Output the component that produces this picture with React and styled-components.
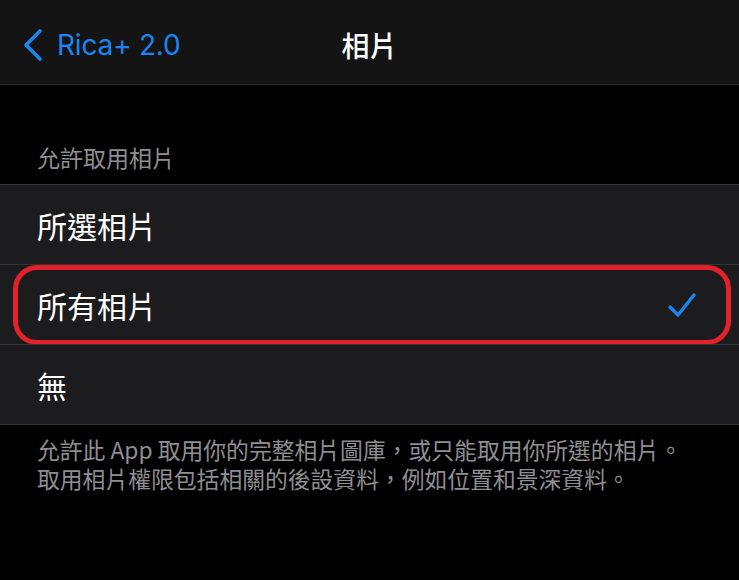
import styled, { createGlobalStyle } from 'styled-components';

const GlobalStyle = createGlobalStyle`
  html, body {
    margin: 0;
    padding: 0;
    background: #000000;
  }
  body {
    font-family: "Noto Sans CJK TC", "Inter", sans-serif;
    -webkit-font-smoothing: antialiased;
  }
`;

const options = [
  { id: 'selected', label: '所選相片' },
  { id: 'all', label: '所有相片', checked: true, highlight: true },
  { id: 'none', label: '無' },
];

export default function App() {
  return (
    <>
      <GlobalStyle />
      <Screen>
        <NavBar>
          <BackButton>
            <svg width="22" height="34" viewBox="0 0 22 34" fill="none">
              <path d="M18 3 L4 17 L18 31" stroke="#1a84f2" strokeWidth="3.6" strokeLinecap="round" strokeLinejoin="round" />
            </svg>
            <span>Rica+ 2.0</span>
          </BackButton>
          <Title>相片</Title>
        </NavBar>

        <SectionHeader>允許取用相片</SectionHeader>

        <List>
          {options.map((opt) => (
            <Row key={opt.id}>
              <RowLabel>{opt.label}</RowLabel>
              {opt.checked && (
                <svg width="30" height="28" viewBox="0 0 30 28" fill="none">
                  <path d="M3 16 L11 24 L27 4" stroke="#1a84f2" strokeWidth="3.4" strokeLinecap="round" strokeLinejoin="round" />
                </svg>
              )}
              {opt.highlight && <Highlight />}
            </Row>
          ))}
        </List>

        <Footer>
          允許此 App 取用你的完整相片圖庫，或只能取用你所選的相片。
          <br />
          取用相片權限包括相關的後設資料，例如位置和景深資料。
        </Footer>
      </Screen>
    </>
  );
}

const Screen = styled.div`
  width: 739px;
  height: 580px;
  background: #000000;
  overflow: hidden;
`;

const NavBar = styled.div`
  position: relative;
  height: 84px;
  background: #141414;
  border-bottom: 1px solid #2c2c2e;
  display: flex;
  align-items: center;
  justify-content: center;
`;

const BackButton = styled.div`
  position: absolute;
  left: 22px;
  top: 0;
  bottom: 0;
  display: flex;
  align-items: center;
  gap: 13px;
  color: #1a84f2;
  font-family: "Inter", "Noto Sans", sans-serif;
  font-size: 28px;
  letter-spacing: -0.2px;
  padding-top: 6px;
`;

const Title = styled.div`
  color: #ffffff;
  font-size: 28px;
  font-weight: 500;
  padding-top: 5px;
`;

const SectionHeader = styled.div`
  padding: 57px 37px 12px;
  font-size: 23px;
  line-height: 30px;
  color: #8e8e93;
`;

const List = styled.div`
  background: #1c1c1e;
  border-top: 1px solid #333335;
  border-bottom: 1px solid #333335;
`;

const Row = styled.div`
  position: relative;
  height: 79px;
  padding: 0 42px 0 37px;
  display: flex;
  align-items: center;
  justify-content: space-between;

  & + & {
    border-top: 1px solid #333335;
  }
`;

const RowLabel = styled.span`
  color: #ffffff;
  font-size: 30px;
  line-height: 40px;
`;

const Highlight = styled.div`
  position: absolute;
  top: 0;
  bottom: -1px;
  left: 13px;
  right: 8px;
  border: 5px solid #e3212b;
  border-radius: 24px;
  pointer-events: none;
`;

const Footer = styled.p`
  margin: 0;
  padding: 10px 37px 0;
  font-size: 22.8px;
  line-height: 29px;
  color: #8e8e93;
`;
